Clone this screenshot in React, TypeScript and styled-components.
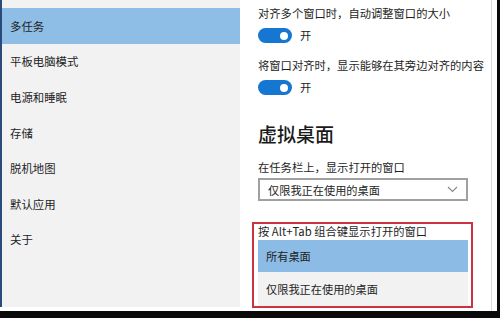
import { FC } from 'react';
import styled, { createGlobalStyle } from 'styled-components';

const GlobalStyle = createGlobalStyle`
  html, body {
    margin: 0;
    padding: 0;
    background: #ffffff;
  }
  body {
    font-family: "Noto Sans CJK SC", "Microsoft YaHei", "Noto Sans", sans-serif;
    color: #1c1c1c;
  }
`;

const navItems = ['多任务', '平板电脑模式', '电源和睡眠', '存储', '脱机地图', '默认应用', '关于'];

interface ToggleProps {
  label: string;
}

const Toggle: FC<ToggleProps> = ({ label }) => (
  <S.ToggleRow>
    <S.Switch>
      <S.Knob />
    </S.Switch>
    <S.ToggleLabel>{label}</S.ToggleLabel>
  </S.ToggleRow>
);

const App: FC = () => {
  return (
    <>
      <GlobalStyle />
      <S.Frame>
        <S.Window>
          <S.Sidebar>
            {navItems.map((item, i) => (
              <S.NavItem key={item} $active={i === 0}>
                {item}
              </S.NavItem>
            ))}
          </S.Sidebar>

          <S.Panel>
            <S.Label>对齐多个窗口时，自动调整窗口的大小</S.Label>
            <Toggle label="开" />
            <S.Label $gap={14}>将窗口对齐时，显示能够在其旁边对齐的内容</S.Label>
            <Toggle label="开" />

            <S.Heading>虚拟桌面</S.Heading>

            <S.Label $gap={12}>在任务栏上，显示打开的窗口</S.Label>
            <S.Dropdown>
              <span>仅限我正在使用的桌面</span>
              <svg width="11" height="7" viewBox="0 0 11 7">
                <polyline
                  points="1,1 5.5,5.5 10,1"
                  fill="none"
                  stroke="#8a8a8a"
                  strokeWidth="1.2"
                />
              </svg>
            </S.Dropdown>

            <S.Label $gap={22}>按 Alt+Tab 组合键显示打开的窗口</S.Label>
            <S.Popup>
              <S.Option $selected>所有桌面</S.Option>
              <S.Option>仅限我正在使用的桌面</S.Option>
            </S.Popup>

            <S.Highlight />
          </S.Panel>
        </S.Window>
      </S.Frame>
    </>
  );
};

const S = {
  Frame: styled.div`
    width: 500px;
    height: 318px;
    box-sizing: border-box;
    border-right: 3px solid #0a0a0a;
    border-bottom: 7px solid #0a0a0a;
    background: #ffffff;
    overflow: hidden;
  `,
  Window: styled.div`
    display: flex;
    height: 311px;
    padding-right: 5px;
    box-sizing: border-box;
  `,
  Sidebar: styled.nav`
    width: 240px;
    height: 307px;
    flex-shrink: 0;
    box-sizing: border-box;
    padding-top: 8px;
    background: #f2f2f2;
    border-left: 2px solid #2a4a7a;
    display: flex;
    flex-direction: column;
  `,
  NavItem: styled.div<{ $active?: boolean }>`
    height: 35.6px;
    display: flex;
    align-items: center;
    padding-left: 8px;
    font-size: 11.4px;
    background: ${(p) => (p.$active ? '#8ebde6' : 'transparent')};
    color: #1e1e1e;
  `,
  Panel: styled.section`
    position: relative;
    flex: 1;
    padding: 5px 0 0 18px;
    border-right: 1px solid #dcdcdc;
    display: flex;
    flex-direction: column;
    align-items: flex-start;
  `,
  Label: styled.div<{ $gap?: number }>`
    margin-top: ${(p) => p.$gap ?? 0}px;
    font-size: 11.3px;
    line-height: 16px;
    white-space: nowrap;
    color: #1e1e1e;
  `,
  ToggleRow: styled.div`
    margin-top: 7px;
    display: flex;
    align-items: center;
    gap: 8px;
    height: 15px;
  `,
  Switch: styled.div`
    width: 34px;
    height: 15px;
    border-radius: 8px;
    background: #1577d2;
    display: flex;
    align-items: center;
    justify-content: flex-end;
    padding-right: 4px;
    box-sizing: border-box;
  `,
  Knob: styled.div`
    width: 8px;
    height: 8px;
    border-radius: 50%;
    background: #ffffff;
  `,
  ToggleLabel: styled.span`
    font-size: 11.3px;
    line-height: 15px;
  `,
  Heading: styled.h2`
    margin: 26px 0 0;
    font-size: 19px;
    line-height: 26px;
    font-weight: 500;
    color: #1a1a1a;
  `,
  Dropdown: styled.div`
    margin-top: 3px;
    width: 210px;
    height: 23px;
    box-sizing: border-box;
    border: 2px solid #a0a0a0;
    display: flex;
    align-items: center;
    justify-content: space-between;
    padding: 0 8px 0 8px;
    font-size: 11.2px;
    color: #1e1e1e;
  `,
  Popup: styled.div`
    margin-top: 1px;
    width: 210px;
    display: flex;
    flex-direction: column;
    background: #f2f2f2;
  `,
  Option: styled.div<{ $selected?: boolean }>`
    height: ${(p) => (p.$selected ? 32 : 34)}px;
    display: flex;
    align-items: center;
    padding-left: 8px;
    font-size: 11.2px;
    background: ${(p) => (p.$selected ? '#8cbce5' : '#f2f2f2')};
    color: #1e1e1e;
  `,
  Highlight: styled.div`
    position: absolute;
    left: 12px;
    top: 222px;
    width: 221px;
    height: 86px;
    box-sizing: border-box;
    border: 2px solid #cc3340;
    pointer-events: none;
  `,
};

export default App;
